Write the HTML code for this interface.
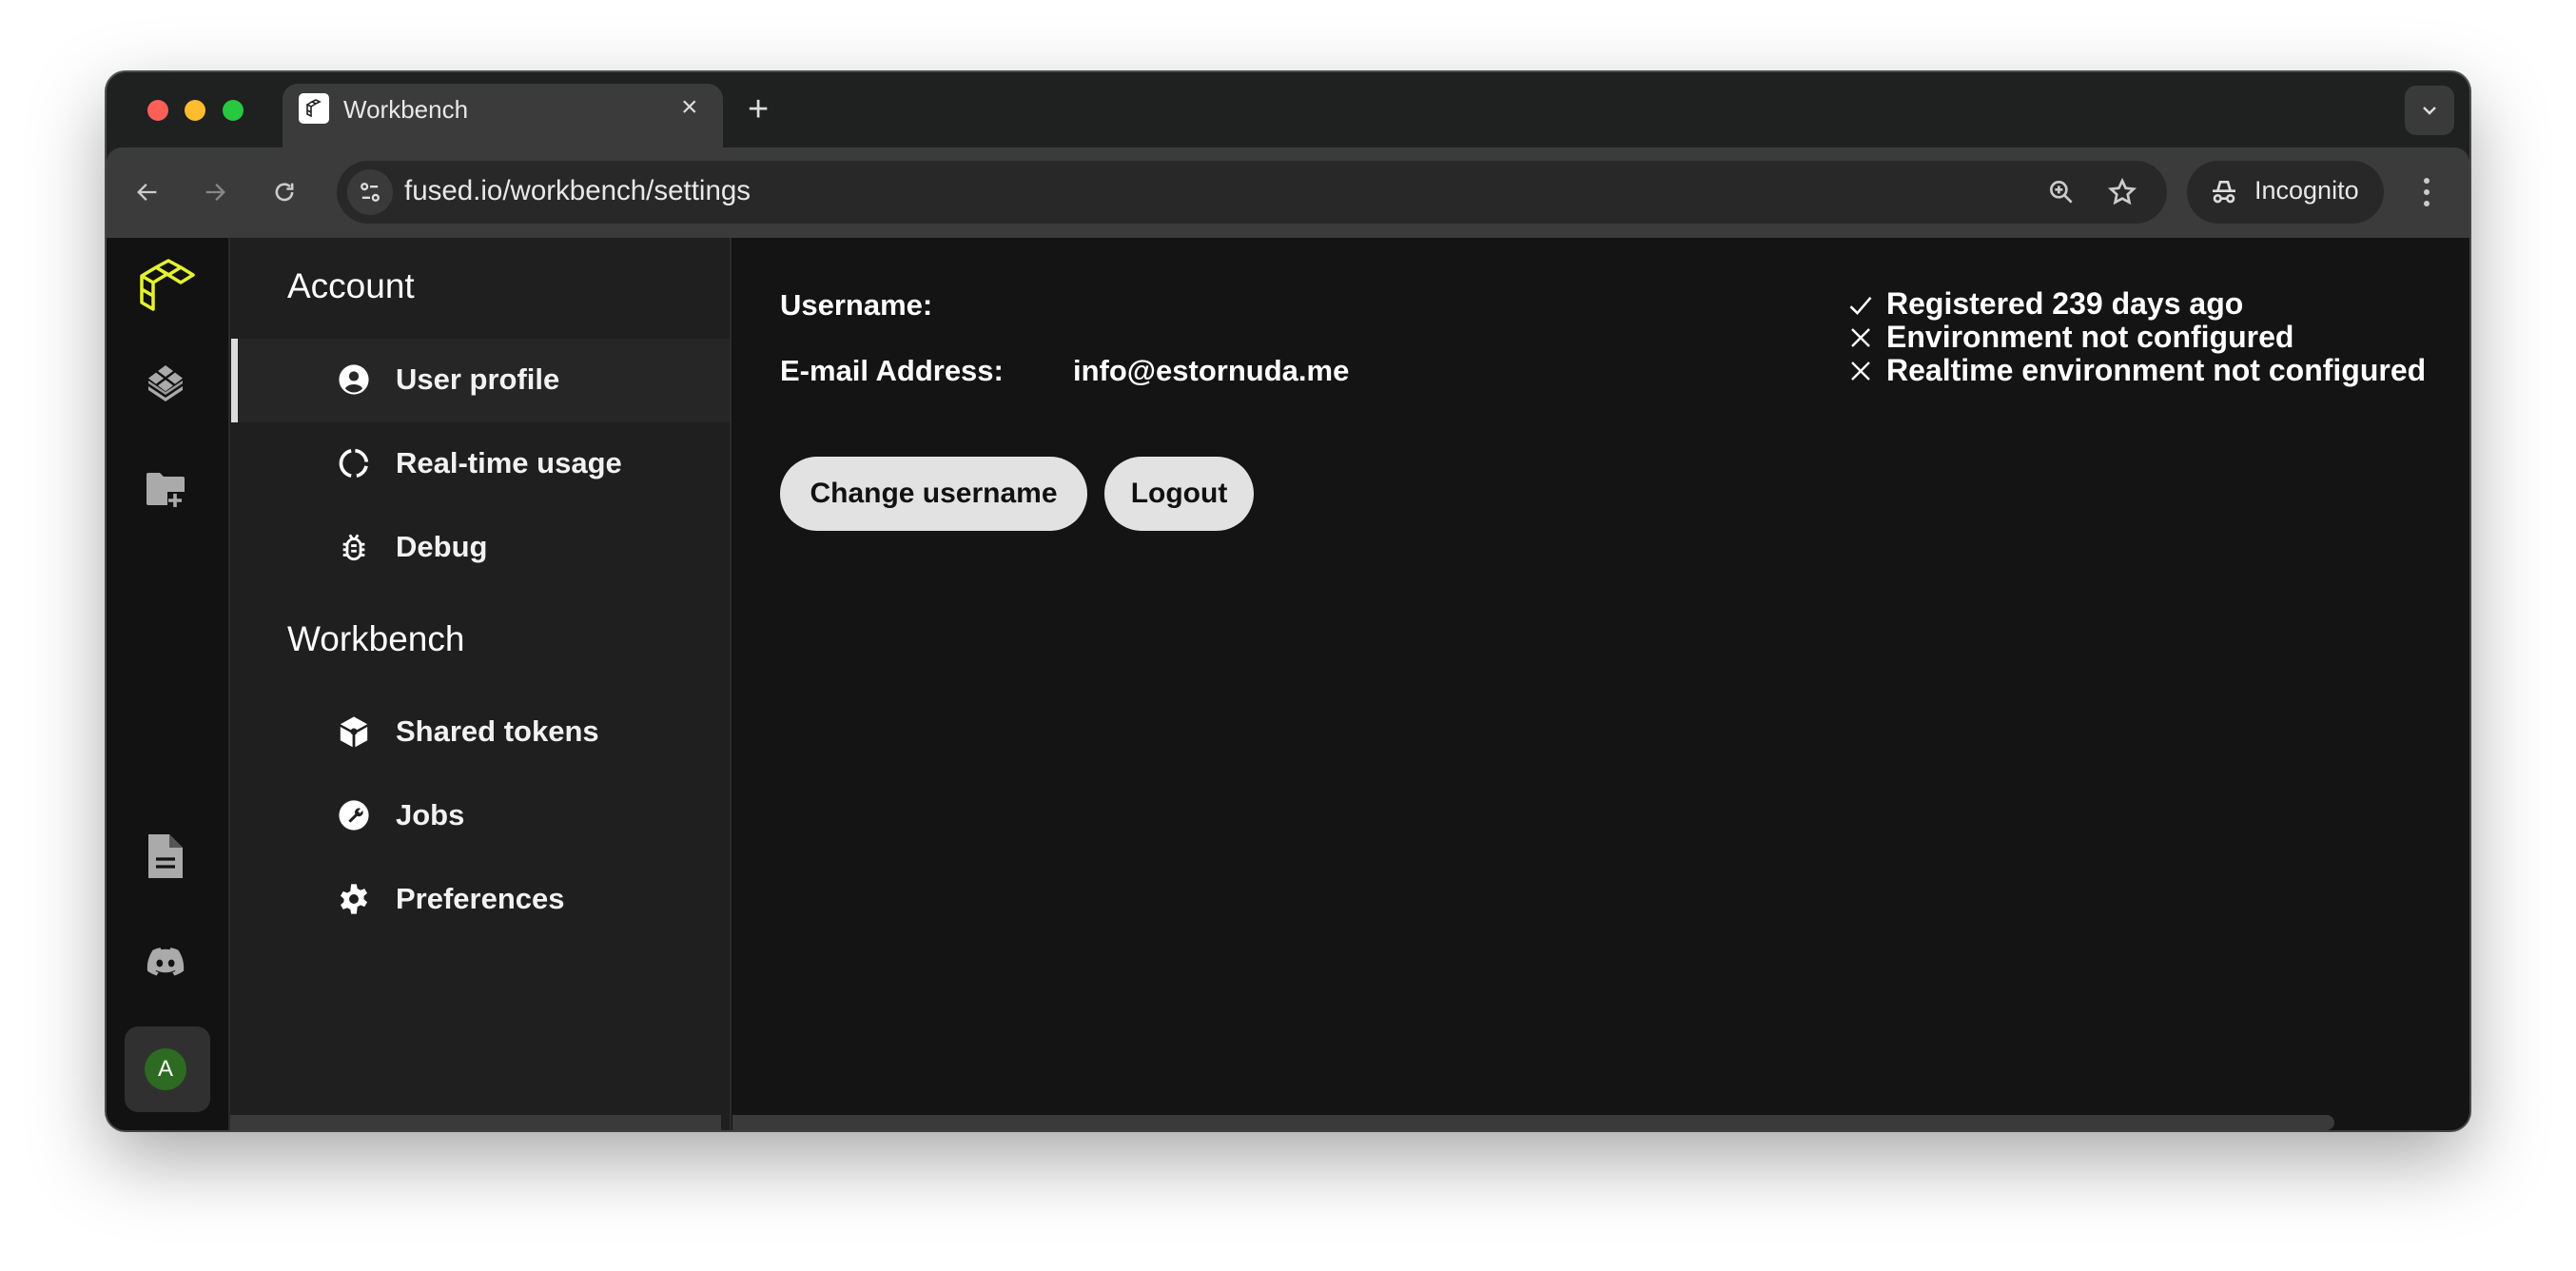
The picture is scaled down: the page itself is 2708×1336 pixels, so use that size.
<!DOCTYPE html>
<html><head><meta charset="utf-8"><style>
*{margin:0;padding:0;box-sizing:border-box}
body{width:2708px;height:1336px;background:#fff;position:relative;overflow:hidden;font-family:"Liberation Sans",sans-serif}
.win{position:absolute;left:112px;top:76px;width:2484px;height:1112px;border-radius:20px;background:#1f2020;overflow:hidden;box-shadow:0 30px 80px rgba(0,0,0,.35),0 0 0 2px #555}
.a{position:absolute}
.tl{width:22px;height:22px;border-radius:50%;top:29px}
.txt{color:#fff;white-space:nowrap}
.item{position:absolute;font-size:31px;font-weight:bold;color:#f2f2f2;white-space:nowrap}
.ic{position:absolute;left:243px;width:34px;height:34px}
</style></head><body>
<div class="win">
 <div class="a tl" style="left:43px;background:#fe5f57"></div>
 <div class="a tl" style="left:82px;background:#febc2e"></div>
 <div class="a tl" style="left:122px;background:#28c840"></div>
 <div class="a" style="left:185px;top:12px;width:463px;height:68px;background:#3b3b3b;border-radius:16px 16px 0 0"></div>
 <div class="a" style="left:202px;top:22px;width:32px;height:32px;background:#fff;border-radius:5px"></div>
 <svg class="a" style="left:206px;top:26px" width="24" height="24" viewBox="0 0 24 24" fill="none" stroke="#222" stroke-width="1.6"><path d="M5 8l5-3 4 2-5 3zM10 5l4-2 4 2-4 2zM5 8v6l4 2v-6M5 14v4l4 2v-4"/></svg>
 <div class="a txt" style="left:249px;top:24px;font-size:26px;color:#e8e8e8">Workbench</div>
 <div class="a txt" style="left:604px;top:20px;font-size:30px;color:#ddd">×</div>
 <div class="a txt" style="left:674px;top:18px;font-size:38px;color:#ddd">+</div>
 <div class="a" style="left:2416px;top:14px;width:52px;height:52px;background:#3a3a3a;border-radius:12px"></div>
 <svg class="a" style="left:2430px;top:28px" width="24" height="24" viewBox="0 0 24 24" fill="none" stroke="#ddd" stroke-width="2.4"><path d="M6 9l6 6 6-6"/></svg>
 <div class="a" style="left:0;top:79px;width:2484px;height:95px;background:#3b3b3b;border-radius:16px 16px 0 0"></div>
 <svg class="a" style="left:29px;top:112px" width="28" height="28" viewBox="0 0 24 24" fill="none" stroke="#ccc" stroke-width="2"><path d="M20 12H5M11 5l-7 7 7 7"/></svg>
 <svg class="a" style="left:100px;top:112px" width="28" height="28" viewBox="0 0 24 24" fill="none" stroke="#888" stroke-width="2"><path d="M4 12h15M13 5l7 7-7 7"/></svg>
 <svg class="a" style="left:173px;top:112px" width="28" height="28" viewBox="0 0 24 24" fill="none" stroke="#ccc" stroke-width="2.2"><path d="M19 12a7 7 0 1 1-2-5M19 4v5h-5"/></svg>
 <div class="a" style="left:242px;top:93px;width:1924px;height:66px;background:#282828;border-radius:33px"></div>
 <div class="a" style="left:253px;top:102px;width:48px;height:48px;background:#3a3a3a;border-radius:50%"></div>
 <svg class="a" style="left:263px;top:112px" width="28" height="28" viewBox="0 0 24 24" fill="none" stroke="#ddd" stroke-width="2"><circle cx="7" cy="7" r="2.5"/><path d="M12 7h7M5 17h7"/><circle cx="17" cy="17" r="2.5"/></svg>
 <div class="a txt" style="left:313px;top:108px;font-size:29.5px;color:#e8e8e8">fused.io/workbench/settings</div>
 <svg class="a" style="left:2039px;top:110px" width="32" height="32" viewBox="0 0 24 24" fill="none" stroke="#ccc" stroke-width="2"><circle cx="10" cy="10" r="6"/><path d="M14.5 14.5L20 20M10 7v6M7 10h6"/></svg>
 <svg class="a" style="left:2103px;top:110px" width="32" height="32" viewBox="0 0 24 24" fill="none" stroke="#ccc" stroke-width="2"><path d="M12 3l2.7 5.8 6.3.7-4.7 4.3 1.3 6.2L12 17l-5.6 3 1.3-6.2L3 9.5l6.3-.7z"/></svg>
 <div class="a" style="left:2187px;top:93px;width:207px;height:66px;background:#282828;border-radius:33px"></div>
 <svg class="a" style="left:2210px;top:110px" width="32" height="32" viewBox="0 0 24 24" fill="none" stroke="#ddd" stroke-width="2"><path d="M7 11l2-7h6l2 7M3 11h18"/><circle cx="7" cy="17" r="2.5"/><circle cx="17" cy="17" r="2.5"/><path d="M9.5 17h5"/></svg>
 <div class="a txt" style="left:2258px;top:109px;font-size:27px;color:#e8e8e8">Incognito</div>
 <svg class="a" style="left:2427px;top:108px" width="24" height="36" viewBox="0 0 24 36" fill="#ccc"><circle cx="12" cy="6" r="3"/><circle cx="12" cy="18" r="3"/><circle cx="12" cy="30" r="3"/></svg>
 <div class="a" style="left:0;top:174px;width:128px;height:938px;background:#121212"></div>
 <div class="a" style="left:128px;top:174px;width:529px;height:938px;background:#1f1f1f;border-left:2px solid #2a2a2a;border-right:2px solid #2c2c2c"></div>
 <div class="a" style="left:657px;top:174px;width:1827px;height:938px;background:#141414"></div>
 <!-- logo -->
 <svg class="a" style="left:34px;top:196px" width="60" height="60" viewBox="0 0 60 60" fill="none" stroke="#e4f230" stroke-width="3.5" stroke-linejoin="round"><path d="M3 18L18 9l12 7-15 9zM18 9L31 2l13 7-13 8zM31 17l13-8 13 8-13 8zM3 18v14l12 7V25M3 32v14l12 7V39"/></svg>
 <svg class="a" style="left:38px;top:302px" width="48" height="48" viewBox="0 0 24 24" fill="#aaa"><path d="M12 3l4 3-4 3-4-3zM7 6.8l4 3-4 3-4-3zM17 6.8l4 3-4 3-4-3zM12 10.6l4 3-4 3-4-3z"/><path d="M3 14l9 6 9-6v2l-9 6-9-6z"/><path d="M3 11l9 6 9-6v1.5l-9 6-9-6z" opacity=".9"/></svg>
 <svg class="a" style="left:38px;top:413px" width="48" height="48" viewBox="0 0 24 24" fill="#aaa"><path d="M2 5a1 1 0 0 1 1-1h6l2 2h10a1 1 0 0 1 1 1v13a1 1 0 0 1-1 1H3a1 1 0 0 1-1-1z"/><rect x="13" y="14" width="9" height="9" fill="#121212"/><path d="M17 15v7M13.5 18.5h7" stroke="#aaa" stroke-width="1.8"/></svg>
 <svg class="a" style="left:44px;top:801px" width="36" height="46" viewBox="0 0 18 23" fill="#aaa"><path d="M0 0h11l7 7v16H0z"/><path d="M11 0v7h7" fill="#555"/><path d="M4 13h10M4 17h10" stroke="#121212" stroke-width="1.6"/></svg>
 <svg class="a" style="left:42px;top:920px" width="40" height="32" viewBox="0 0 24 19" fill="#aaa"><path d="M20 1.5A19 19 0 0 0 15.3 0l-.6 1.2a17 17 0 0 0-5.4 0L8.7 0A19 19 0 0 0 4 1.5C1 6 .2 10.4.6 14.7a19 19 0 0 0 5.8 2.9l1.2-2a12 12 0 0 1-1.900-.9l.5-.4a13.5 13.5 0 0 0 11.6 0l.5.4a12 12 0 0 1-1.9.9l1.2 2a19 19 0 0 0 5.8-2.9c.5-5-.8-9.4-3.4-13.2zM8.3 12.1c-1.1 0-2-1-2-2.300s.9-2.3 2-2.3 2 1 2 2.3-.9 2.3-2 2.3zm7.4 0c-1.1 0-2-1-2-2.3s.9-2.3 2-2.3 2 1 2 2.3-.9 2.3-2 2.3z"/></svg>
 <div class="a" style="left:19px;top:1003px;width:90px;height:90px;background:#303030;border-radius:14px"></div>
 <div class="a" style="left:40px;top:1026px;width:44px;height:44px;background:#2c6b21;border-radius:50%;color:#fff;font-size:24px;text-align:center;line-height:44px">A</div>
 <!-- sidebar -->
 <div class="a txt" style="left:190px;top:204px;font-size:37px;color:#fff">Account</div>
 <div class="a" style="left:130px;top:280px;width:525px;height:88px;background:#262626"></div>
 <div class="a" style="left:131px;top:280px;width:7px;height:88px;background:#ddd"></div>
 <svg class="ic" style="top:306px" viewBox="0 0 24 24"><circle cx="12" cy="12" r="11" fill="#fff"/><circle cx="12" cy="9.5" r="3.6" fill="#262626"/><path d="M5.5 18.5a7.5 6 0 0 1 13 0a8.5 8.5 0 0 1-13 0z" fill="#262626"/></svg>
 <div class="item" style="left:304px;top:305px">User profile</div>
 <svg class="ic" style="top:394px" viewBox="0 0 24 24" fill="none" stroke="#fff" stroke-width="2.6"><path d="M13 2.6A9.5 9.5 0 0 1 21.4 11M21.2 14A9.5 9.5 0 0 1 14 21.3M10 21.3A9.5 9.5 0 0 1 10 2.7"/></svg>
 <div class="item" style="left:304px;top:393px">Real-time usage</div>
 <svg class="ic" style="top:482px" viewBox="0 0 24 24" fill="none" stroke="#fff" stroke-width="2"><rect x="7" y="6" width="10" height="15" rx="5"/><path d="M9 3l2 3M15 3l-2 3M4 10h3M4 14h3M4 18h3M17 10h3M17 14h3M17 18h3M10 11h4M10 15h4"/></svg>
 <div class="item" style="left:304px;top:481px">Debug</div>
 <div class="a txt" style="left:190px;top:575px;font-size:37px;color:#fff">Workbench</div>
 <svg class="ic" style="top:676px" viewBox="0 0 24 24" fill="#fff"><path d="M12 1l10 5.5-10 5.5L2 6.5zM2 8.5l9 5v10l-9-5zM22 8.5l-9 5v10l9-5z"/><circle cx="12" cy="12" r="2.5" fill="#1f1f1f"/></svg>
 <div class="item" style="left:304px;top:675px">Shared tokens</div>
 <svg class="ic" style="top:764px" viewBox="0 0 24 24"><circle cx="12" cy="12" r="11" fill="#fff"/><path d="M8 16l5-5a3 3 0 0 1 4-4l-2 2 1.5 1.5 2-2a3 3 0 0 1-4 4l-5 5z" fill="#1f1f1f"/></svg>
 <div class="item" style="left:304px;top:763px">Jobs</div>
 <svg class="ic" style="top:852px" viewBox="0 0 24 24" fill="#fff"><path d="M10 1h4l.6 3.2 2.3 1.3 3-1.2 2 3.4-2.5 2.1v2.4l2.5 2.1-2 3.4-3-1.2-2.3 1.3L14 23h-4l-.6-3.2-2.3-1.3-3 1.2-2-3.4 2.5-2.1v-2.4L2.1 9.700l2-3.4 3 1.2 2.3-1.3z"/><circle cx="12" cy="12" r="3.5" fill="#1f1f1f"/></svg>
 <div class="item" style="left:304px;top:851px">Preferences</div>
 <div class="a" style="left:130px;top:1096px;width:516px;height:16px;background:#3a3a3a"></div>
 <div class="a" style="left:658px;top:1096px;width:1684px;height:16px;background:#3a3a3a;border-radius:0 8px 8px 0"></div>
 <!-- main -->
 <div class="a txt" style="left:708px;top:227px;font-size:31px;font-weight:bold">Username:</div>
 <div class="a txt" style="left:708px;top:296px;font-size:31px;font-weight:bold">E-mail Address:</div>
 <div class="a txt" style="left:1016px;top:296px;font-size:31px;font-weight:bold">info@estornuda.me</div>
 <div class="a" style="left:708px;top:404px;width:323px;height:78px;background:#e2e2e2;border-radius:39px;font-size:30px;font-weight:bold;color:#111;text-align:center;line-height:78px">Change username</div>
 <div class="a" style="left:1049px;top:404px;width:157px;height:78px;background:#e2e2e2;border-radius:39px;font-size:30px;font-weight:bold;color:#111;text-align:center;line-height:78px">Logout</div>
 <svg class="a" style="left:1830px;top:231px" width="28" height="28" viewBox="0 0 24 24" fill="none" stroke="#fff" stroke-width="2.2"><path d="M3 13l6 6L21 5"/></svg>
 <svg class="a" style="left:1832px;top:267px" width="24" height="24" viewBox="0 0 24 24" fill="none" stroke="#fff" stroke-width="2.4"><path d="M3 3l18 18M21 3L3 21"/></svg>
 <svg class="a" style="left:1832px;top:302px" width="24" height="24" viewBox="0 0 24 24" fill="none" stroke="#fff" stroke-width="2.4"><path d="M3 3l18 18M21 3L3 21"/></svg>
 <div class="a txt" style="left:1871px;top:226px;font-size:32px;font-weight:bold;line-height:35px">Registered 239 days ago<br>Environment not configured<br>Realtime environment not configured</div>
</div>
</body></html>
